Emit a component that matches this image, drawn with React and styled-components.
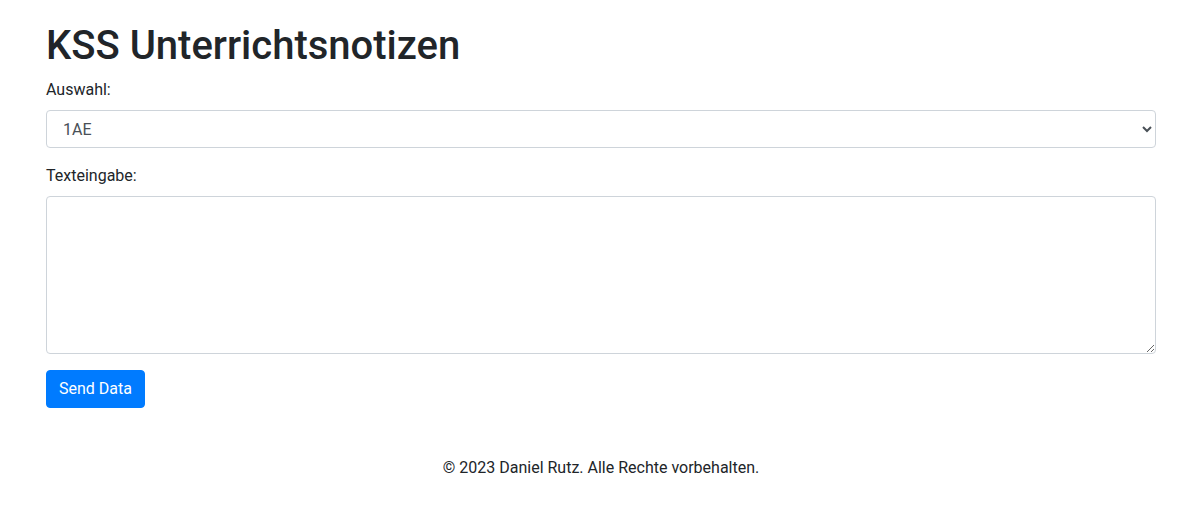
import React from "react";
import styled, { createGlobalStyle } from "styled-components";

const GlobalStyle = createGlobalStyle`
  *, *::before, *::after { box-sizing: border-box; }
  body {
    margin: 0;
    font-family: Roboto, "Helvetica Neue", Arial, "Noto Sans", sans-serif;
    font-size: 16px;
    line-height: 1.5;
    color: #212529;
    background: #fff;
  }
`;

const Container = styled.div`
  width: 1140px;
  margin-left: 31px;
  padding: 22px 15px 0;
`;

const Title = styled.h1`
  margin: 0 0 8px;
  font-size: 40px;
  font-weight: 500;
  line-height: 1.2;
`;

const FormGroup = styled.div`
  margin-bottom: 16px;
`;

const Label = styled.label`
  display: inline-block;
  margin-bottom: 8px;
`;

const controlBase = `
  display: block;
  width: 100%;
  padding: 6px 12px;
  font-family: inherit;
  font-size: 16px;
  font-weight: 400;
  line-height: 1.5;
  color: #495057;
  background-color: #fff;
  border: 1px solid #ced4da;
  border-radius: 4px;
  outline: none;
`;

const Select = styled.select`
  ${controlBase}
  height: 38px;
`;

const TextArea = styled.textarea`
  ${controlBase}
  height: 158px;
  resize: vertical;
  margin: 0;
`;

const Button = styled.button`
  display: inline-block;
  font-family: inherit;
  font-size: 16px;
  line-height: 1.5;
  font-weight: 400;
  color: #fff;
  background-color: #007bff;
  border: 1px solid #007bff;
  border-radius: 4px;
  padding: 6px 12px;
  cursor: pointer;
`;

const Footer = styled.footer`
  margin-top: 48px;
  text-align: center;
`;

export default function App() {
  return (
    <>
      <GlobalStyle />
      <Container>
        <Title>KSS Unterrichtsnotizen</Title>
        <form onSubmit={(e) => e.preventDefault()}>
          <FormGroup>
            <Label htmlFor="auswahl">Auswahl:</Label>
            <Select id="auswahl" defaultValue="1AE">
              <option value="1AE">1AE</option>
            </Select>
          </FormGroup>
          <FormGroup>
            <Label htmlFor="text">Texteingabe:</Label>
            <TextArea id="text" rows={6} />
          </FormGroup>
          <Button type="submit">Send Data</Button>
        </form>
        <Footer>© 2023 Daniel Rutz. Alle Rechte vorbehalten.</Footer>
      </Container>
    </>
  );
}
